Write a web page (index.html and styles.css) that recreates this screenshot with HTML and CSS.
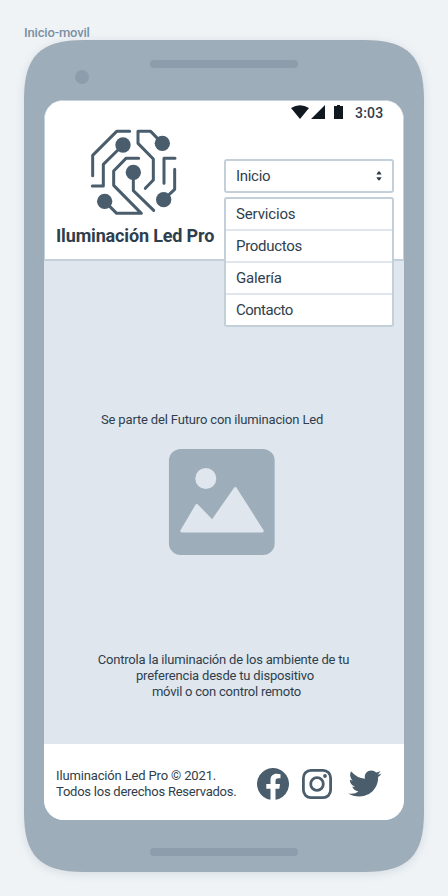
FILE: index.html
```html
<!DOCTYPE html>
<html lang="es">
<head>
<meta charset="utf-8">
<title>Inicio-movil</title>
<link rel="stylesheet" href="styles.css">
</head>
<body>
<div class="label"><span>Inicio-movil</span></div>
<div class="phone">
  <svg class="shell" viewBox="0 0 400 832" aria-hidden="true">
    <path d="M0 60C0 16 16 0 60 0H340C384 0 400 16 400 60V772C400 816 384 832 340 832H60C16 832 0 816 0 772Z"/>
  </svg>
  <div class="top"><i class="camera"></i><i class="bar"></i></div>
  <main class="screen">
    <header class="header">
      <div class="status">
        <svg width="54" height="16" viewBox="0 0 54 16" aria-hidden="true">
          <path d="M0 4Q9-1.4 18 4L9 15ZM20 15L34 1V15ZM43 2H46V1H49V2H52V15H43Z"/>
        </svg>
        <span class="time">3:03</span>
      </div>
      <div class="nav-row">
        <div class="brand">
          <svg class="logo" viewBox="0 0 330 315" aria-hidden="true">
            <g class="traces">
              <path d="M149 34H110L38 106V167M129 75L70 133V198H37"/>
              <path d="M247 70L212 34H174V70L220 117V180L196 205M285 115H252V190M284 148V208L251 239"/>
              <path d="M176 115H138L101 153V196L184 280H110L74 244M160 157V212L221 271"/>
            </g>
            <circle cx="129" cy="75" r="23"/><circle cx="247" cy="70" r="23"/><circle cx="160" cy="157" r="23"/><circle cx="74" cy="244" r="23"/><circle cx="251" cy="239" r="23"/>
          </svg>
          <h1><span>Iluminación Led Pro</span></h1>
        </div>
        <nav class="menu">
          <div class="select"><span>Inicio</span>
            <svg width="6" height="10" viewBox="0 0 6 10" aria-hidden="true"><path d="M.4 3.6L2.2 .6H3.8L5.6 3.6ZM.4 6.2L2.2 9.2H3.8L5.6 6.2Z"/></svg>
          </div>
          <ul class="options"><li><span class="o1">Servicios</span></li><li><span class="o2">Productos</span></li><li><span class="o3">Galería</span></li><li><span class="o4">Contacto</span></li></ul>
        </nav>
      </div>
    </header>
    <section class="hero">
      <p class="tagline"><span>Se parte del Futuro con iluminacion Led</span></p>
      <svg class="picture" viewBox="0 0 106 106" aria-hidden="true">
        <rect width="106" height="106" rx="12"/>
        <g class="cut"><circle cx="37" cy="29.5" r="10.5"/><path d="M13 82L28 56.5L43.5 72.5L66.5 39.5L93.5 82Z"/></g>
      </svg>
      <p class="copy"><span class="c1">Controla la iluminación de los ambiente de tu</span><br><span class="c2">preferencia desde tu dispositivo</span><br><span class="c3">móvil o con control remoto</span></p>
    </section>
    <footer class="footer">
      <p><span class="f1">Iluminación Led Pro © 2021.</span><br><span class="f2">Todos los derechos Reservados.</span></p>
      <div class="social">
        <svg width="32" height="32" viewBox="0 0 32 32" aria-label="Facebook"><path d="M13.5 31.8A16 16 0 1 1 18.5 31.8V20.7H22.3L23 16H18.5V13Q18.5 10.2 21.4 10.2H23.5V6.2Q21.6 5.8 19.8 5.8C15.8 5.8 13.5 8.1 13.5 12.3V16H9.3V20.7H13.5Z"/></svg>
        <svg class="insta" width="30" height="30" viewBox="0 0 30 30" aria-label="Instagram"><rect x="1.4" y="1.4" width="27.2" height="27.2" rx="7.5"/><circle cx="15" cy="15" r="6.3"/><circle class="dot" cx="23" cy="7" r="1.9"/></svg>
        <svg width="35" height="28" viewBox="0 0 35 28" aria-label="Twitter"><path d="M0 23.3Q6 25 10.4 21.4Q5.6 20.8 4.2 16.6Q5.8 17 7 16.5Q2 15.4 1.8 9.6Q3.2 10.5 4.8 10.5Q.5 7 3 1.3Q9.1 8.5 17 8.7C15.9 3.5 19.3.4 23.3.4Q26.3.4 28.2 2.5Q30.5 2 32.3.9Q31.6 3.2 29.6 4.5Q31.7 4.2 33.5 3.4Q32.3 5.4 30.1 7.1C30.5 16 24 26.5 11.5 26.5Q5 26.5 0 23.3Z"/></svg>
      </div>
    </footer>
  </main>
  <div class="bottom"><i class="bar"></i></div>
</div>
</body>
</html>
```

FILE: styles.css
```css
* { box-sizing: border-box; margin: 0; padding: 0; }
body { width: 448px; height: 896px; overflow: hidden; padding: 24px 24px 0; background: #eff3f6; color: #2f3e4c; font: 13px/16px Roboto, sans-serif; }
span { white-space: nowrap; }
svg { display: block; fill: #495d6c; flex: none; }
.label { height: 16px; color: #7a90a2; font-size: 13px; font-weight: 500; line-height: 17px; letter-spacing: -.17px; }
.phone { position: relative; width: 400px; height: 832px; padding: 0 20px; display: flex; flex-direction: column; }
.shell { position: absolute; left: 0; top: 0; width: 400px; height: 832px; z-index: -1; overflow: visible; fill: #9eadba; filter: drop-shadow(0 2px 5px rgba(70, 90, 110, .15)); }
.top { height: 60px; display: flex; padding: 20px 0 0 31px; }
.camera { width: 14px; height: 14px; margin: 10px 61px 0 0; border-radius: 50%; background: #8e9dac; }
.bar { width: 148px; height: 8px; border-radius: 4px; background: #8e9dac; }
.bottom { height: 52px; padding: 28px 0 0 106px; display: flex; }
.screen { width: 360px; height: 720px; border-radius: 20px; overflow: hidden; background: #dfe6ee; display: flex; flex-direction: column; }
.header { height: 161px; background: #fff; border: 1px solid #c3cfd9; border-bottom-width: 2px; border-radius: 18px 18px 0 0; position: relative; z-index: 1; }
.status { height: 24px; display: flex; align-items: center; padding-left: 246px; gap: 10px; }
.status svg { fill: #101820; margin-bottom: 2px; }
.time { font-size: 14px; font-weight: 500; letter-spacing: .2px; margin-top: -1px; }
.nav-row { display: flex; justify-content: space-between; padding: 0 9px 0 11px; }
.logo { width: 110px; height: 105px; margin: -5px 0 0 24px; }
.traces { fill: none; stroke: #495d6c; stroke-width: 9; stroke-linecap: round; stroke-linejoin: round; }
.brand { width: 160px; }
h1 { font-size: 18px; line-height: 22px; font-weight: 700; letter-spacing: -.16px; }
.menu { width: 170px; margin-top: 34px; font-size: 15px; letter-spacing: -.3px; }
.select, .options { border: 2px solid #c3cfd9; border-radius: 3px; background: #fff; list-style: none; }
.select { height: 34px; display: flex; align-items: center; justify-content: space-between; padding: 0 10px; margin-bottom: 4px; }
.select svg { fill: #2f3e4c; }
.options li { height: 32px; padding-left: 10px; line-height: 30px; border-bottom: 2px solid #dfe6ee; }
.options { height: 130px; }
.options li:last-child { border: 0; height: 30px; }
.o1, .o3 { letter-spacing: -.15px; }
.o4 { letter-spacing: -.5px; }
.hero { height: 483px; padding-top: 151px; display: flex; flex-direction: column; }
.tagline { padding-left: 57px; height: 36.5px; letter-spacing: -.16px; }
.picture { width: 106px; height: 106px; margin-left: 124.5px; fill: #9eadba; transform: translateX(-.2px); }
.cut { fill: #dfe6ee; stroke: #dfe6ee; }
.cut path { stroke-width: 3; stroke-linejoin: round; }
.cut circle { stroke: none; }
.copy { margin-top: 97.5px; text-align: center; padding-right: 1px; letter-spacing: -.19px; }
.c3 { letter-spacing: -.23px; padding-left: 6px; }
.c2 { padding-left: 3px; }
.footer { height: 76px; background: #fff; display: flex; padding: 24px 0 0 12px; }
.footer p { width: 201px; }
.f1 { letter-spacing: -.15px; }
.f2 { letter-spacing: -.24px; }
.social { display: flex; align-items: center; height: 32px; }
.insta { margin: 0 16px 0 13px; fill: none; stroke: #495d6c; stroke-width: 2.8; }
.dot { fill: #495d6c; stroke: none; }
```
